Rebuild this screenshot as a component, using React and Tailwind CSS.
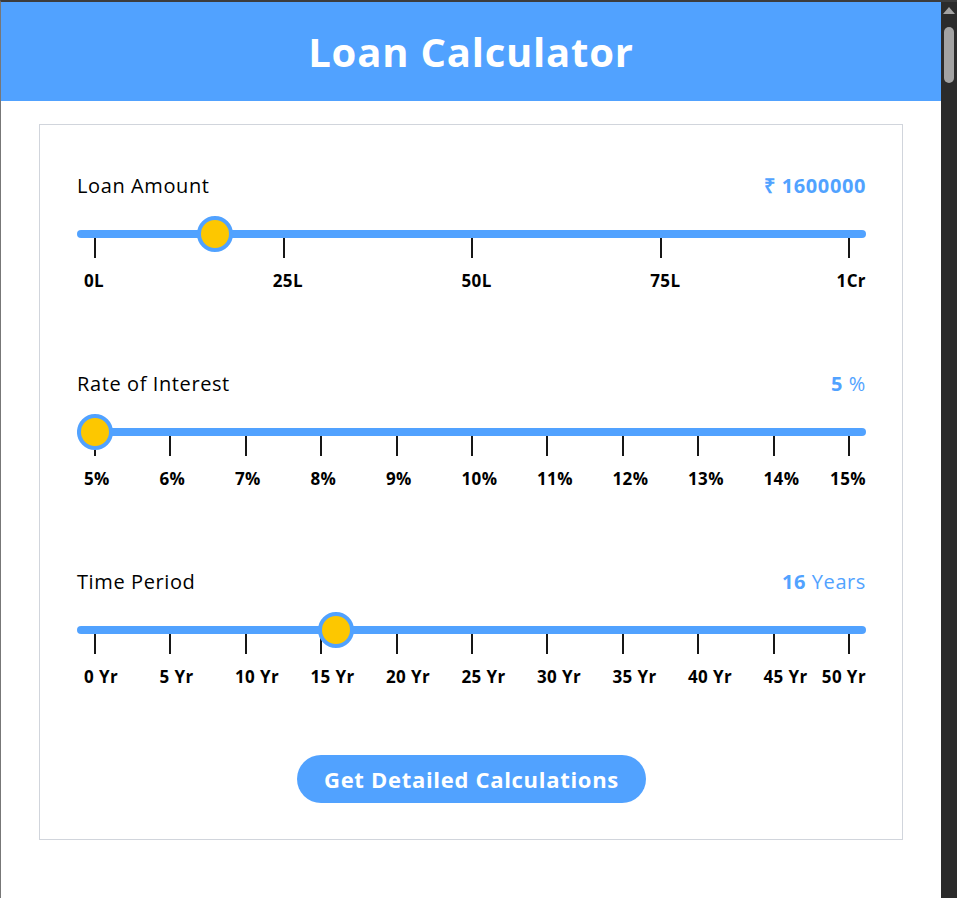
import { useState } from "react";

const sliders = [
  {
    key: "amount",
    title: "Loan Amount",
    min: 0,
    max: 10000000,
    start: 1600000,
    labels: ["0L", "25L", "50L", "75L", "1Cr"],
    cols: "grid-cols-[repeat(4,minmax(0,1fr))_27px]",
    value: (v) => <span className="font-bold">₹ {v}</span>,
  },
  {
    key: "rate",
    title: "Rate of Interest",
    min: 5,
    max: 15,
    start: 5,
    labels: ["5%", "6%", "7%", "8%", "9%", "10%", "11%", "12%", "13%", "14%", "15%"],
    cols: "grid-cols-[repeat(10,minmax(0,1fr))_27px]",
    value: (v) => (
      <>
        <span className="font-bold">{v}</span> %
      </>
    ),
  },
  {
    key: "time",
    title: "Time Period",
    min: 0,
    max: 50,
    start: 16,
    labels: ["0 Yr", "5 Yr", "10 Yr", "15 Yr", "20 Yr", "25 Yr", "30 Yr", "35 Yr", "40 Yr", "45 Yr", "50 Yr"],
    cols: "grid-cols-[repeat(10,minmax(0,1fr))_27px]",
    value: (v) => (
      <>
        <span className="font-bold">{v}</span> Years
      </>
    ),
  },
];

function Slider({ item }) {
  const [val] = useState(item.start);
  const pct = (val - item.min) / (item.max - item.min);
  const last = item.labels.length - 1;

  return (
    <div>
      <div className="flex h-7 items-center justify-between text-[20px] tracking-[0.6px]">
        <span className="text-black">{item.title}</span>
        <span className="text-blue-400">{item.value(val)}</span>
      </div>

      {/* track + thumb */}
      <div className="relative mt-[30px] h-2 rounded-full bg-blue-400">
        <div
          className="absolute top-[-14px] h-9 w-9 rounded-full border-4 border-blue-400 bg-yellow-400"
          style={{ left: `calc(${pct} * (100% - 36px))` }}
        />
      </div>

      {/* ticks */}
      <div className="ml-[17px] mr-[16px] flex justify-between">
        {item.labels.map((l) => (
          <div key={l} className="h-5 w-0.5 bg-neutral-900" />
        ))}
      </div>

      {/* labels */}
      <div className={`mt-[11px] grid pl-[7px] text-[17px] font-bold leading-6 tracking-[0.4px] text-black ${item.cols}`}>
        {item.labels.map((l, i) =>
          i < last ? (
            <div key={l} className="whitespace-nowrap">
              {l}
            </div>
          ) : (
            <div key={l} className="flex w-full min-w-0 justify-end whitespace-nowrap">
              <span>{l}</span>
            </div>
          )
        )}
      </div>
    </div>
  );
}

export default function App() {
  return (
    <div className="flex h-[898px] w-[957px] flex-col overflow-hidden border-t-2 border-l border-t-[#3c3c3c] border-l-[#777777] bg-white font-['Open_Sans',sans-serif]">
      <div className="flex min-h-0 flex-1">
        <main className="flex-1">
          <header className="flex h-[99px] items-center justify-center bg-blue-400">
            <h1 className="text-[40px] font-bold tracking-[0.8px] text-white">Loan Calculator</h1>
          </header>

          <div className="mx-[38px] mt-[23px] border border-gray-300 pl-[37px] pr-[36px] pt-[47px] pb-[36px]">
            <div className="flex flex-col gap-[77px]">
              {sliders.map((s) => (
                <Slider key={s.key} item={s} />
              ))}
            </div>

            <div className="mt-[66px] flex justify-center">
              <button className="h-12 rounded-full bg-blue-400 px-[27px] text-[22px] font-bold tracking-[0.7px] text-white">
                Get Detailed Calculations
              </button>
            </div>
          </div>
        </main>

        {/* scrollbar */}
        <div className="flex w-4 flex-col items-center bg-[#2b2b2b] pt-[5px]">
          <div className="h-0 w-0 border-x-[6px] border-b-[7px] border-x-transparent border-b-[#a3a3a3]" />
          <div className="mt-[13px] h-[56px] w-[10px] rounded-full bg-[#a3a3a3]" />
        </div>
      </div>
    </div>
  );
}
